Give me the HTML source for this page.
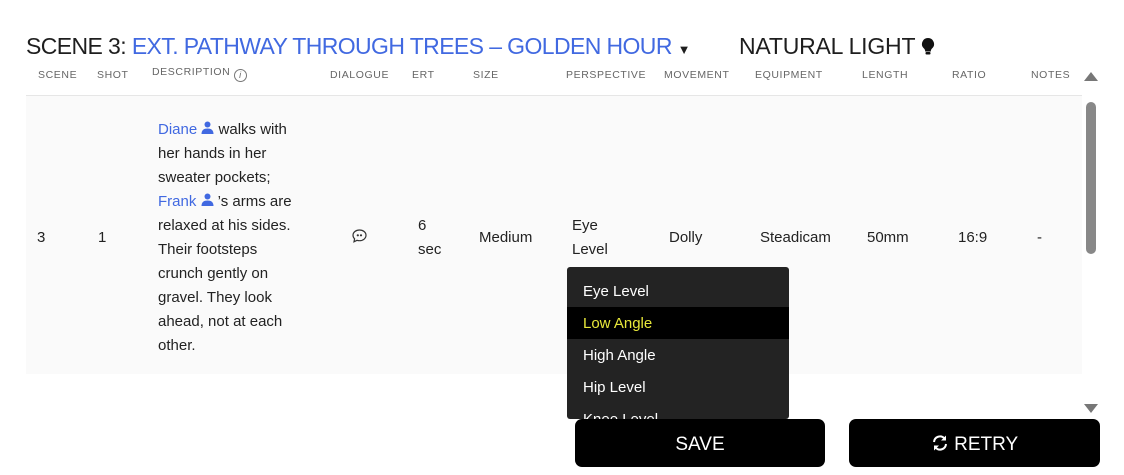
<!DOCTYPE html>
<html><head><style>
*{margin:0;padding:0;box-sizing:border-box}
body{width:1124px;height:475px;background:#fff;font-family:"Liberation Sans",sans-serif;position:relative;overflow:hidden;color:#222}
.a{position:absolute;white-space:nowrap}
.t{font-size:23px;top:33px;left:26px;color:#1e1e1e;letter-spacing:-0.2px}
.h{font-size:10.5px;color:#666;top:69px;letter-spacing:0.6px}
.c{font-size:15px;color:#222}
.blue{color:#4169e1}
.dd{left:567px;top:267px;width:222px;height:152px;background:#232323;border-radius:3px;overflow:hidden}
.dd div{height:32px;line-height:34px;padding-left:16px;color:#fff;font-size:15px;margin-top:0}
.btn{background:#000;color:#fff;border-radius:7px;top:419px;height:48px;font-size:19px;text-align:center;line-height:51px}
</style></head><body>
<div class="a t" style="letter-spacing:-0.6px">SCENE 3: <span class="blue">EXT. PATHWAY THROUGH TREES – GOLDEN HOUR</span> <span style="font-size:13px">▼</span></div>
<div class="a t" style="left:739px">NATURAL LIGHT <svg width="14" height="18" viewBox="0 0 14 18" style="vertical-align:-1px"><path d="M7 1a6 6 0 0 0-4 10.5c1 1 1.2 2 1.2 3h5.6c0-1 .2-2 1.2-3A6 6 0 0 0 7 1z" fill="#111"/><rect x="4.5" y="15" width="5" height="2.5" rx="1" fill="#111"/></svg></div>
<div class="a h" style="left:38px">SCENE</div>
<div class="a h" style="left:97px">SHOT</div>
<div class="a h" style="left:152px;top:66px">DESCRIPTION <span style="display:inline-block;width:13px;height:13px;border:1px solid #777;border-radius:50%;font-size:9px;text-align:center;line-height:11px;font-style:italic;vertical-align:-3px">i</span></div>
<div class="a h" style="left:330px">DIALOGUE</div>
<div class="a h" style="left:412px">ERT</div>
<div class="a h" style="left:473px">SIZE</div>
<div class="a h" style="left:566px">PERSPECTIVE</div>
<div class="a h" style="left:664px">MOVEMENT</div>
<div class="a h" style="left:755px">EQUIPMENT</div>
<div class="a h" style="left:862px">LENGTH</div>
<div class="a h" style="left:952px">RATIO</div>
<div class="a h" style="left:1031px">NOTES</div>
<div class="a" style="left:26px;top:95px;width:1056px;height:1px;background:#e6e6e6"></div>
<div class="a" style="left:26px;top:96px;width:1056px;height:278px;background:#fafafa"></div>
<div class="a" style="left:1084px;top:72px;width:0;height:0;border-left:7px solid transparent;border-right:7px solid transparent;border-bottom:9px solid #777"></div>
<div class="a" style="left:1086px;top:102px;width:10px;height:152px;background:#888;border-radius:5px"></div>
<div class="a" style="left:1084px;top:404px;width:0;height:0;border-left:7px solid transparent;border-right:7px solid transparent;border-top:9px solid #777"></div>
<div class="a c" style="left:37px;top:229px">3</div>
<div class="a c" style="left:98px;top:229px">1</div>
<div class="a c" style="left:158px;top:118px;line-height:24px;white-space:normal;width:150px">
<span class="blue">Diane</span> <svg width="13" height="13" viewBox="0 0 13 13"><circle cx="6.5" cy="3.5" r="3" fill="#4169e1"/><path d="M0.5 13c0-4 2.5-5.5 6-5.5s6 1.5 6 5.5z" fill="#4169e1"/></svg> walks with<br>her hands in her<br>sweater pockets;<br><span class="blue">Frank</span> <svg width="13" height="13" viewBox="0 0 13 13"><circle cx="6.5" cy="3.5" r="3" fill="#4169e1"/><path d="M0.5 13c0-4 2.5-5.5 6-5.5s6 1.5 6 5.5z" fill="#4169e1"/></svg> ’s arms are<br>relaxed at his sides.<br>Their footsteps<br>crunch gently on<br>gravel. They look<br>ahead, not at each<br>other.</div>
<svg class="a" style="left:352px;top:229px" width="15" height="14" viewBox="0 0 15 14"><path d="M7.5 1C3.9 1 1 3.3 1 6.3c0 1.4.6 2.6 1.6 3.5L2 12.8l3-1.5c.8.3 1.6.4 2.5.4 3.6 0 6.5-2.3 6.5-5.4S11.1 1 7.5 1z" fill="none" stroke="#333" stroke-width="1.2"/><circle cx="5.8" cy="6.3" r="1.1" fill="#333"/><circle cx="9" cy="6.3" r="1.1" fill="#333"/></svg>
<div class="a c" style="left:418px;top:214px;line-height:24px">6<br>sec</div>
<div class="a c" style="left:479px;top:229px">Medium</div>
<div class="a c" style="left:572px;top:214px;line-height:24px">Eye<br>Level</div>
<div class="a c" style="left:669px;top:229px">Dolly</div>
<div class="a c" style="left:760px;top:229px">Steadicam</div>
<div class="a c" style="left:867px;top:229px">50mm</div>
<div class="a c" style="left:958px;top:229px">16:9</div>
<div class="a c" style="left:1037px;top:229px">-</div>
<div class="a dd">
<div style="margin-top:8px">Eye Level</div>
<div style="background:#000;color:#e8e83a">Low Angle</div>
<div>High Angle</div>
<div>Hip Level</div>
<div>Knee Level</div>
</div>
<div class="a btn" style="left:575px;width:250px">SAVE</div>
<div class="a btn" style="left:849px;width:251px"><svg width="18" height="18" viewBox="0 0 18 18" style="vertical-align:-2px"><path d="M3 8a6 6 0 0 1 10.5-3.5M15 10a6 6 0 0 1-10.5 3.5" fill="none" stroke="#fff" stroke-width="2"/><path d="M15 1.5v5h-5z M3 16.5v-5h5z" fill="#fff"/></svg> RETRY</div>
</body></html>
